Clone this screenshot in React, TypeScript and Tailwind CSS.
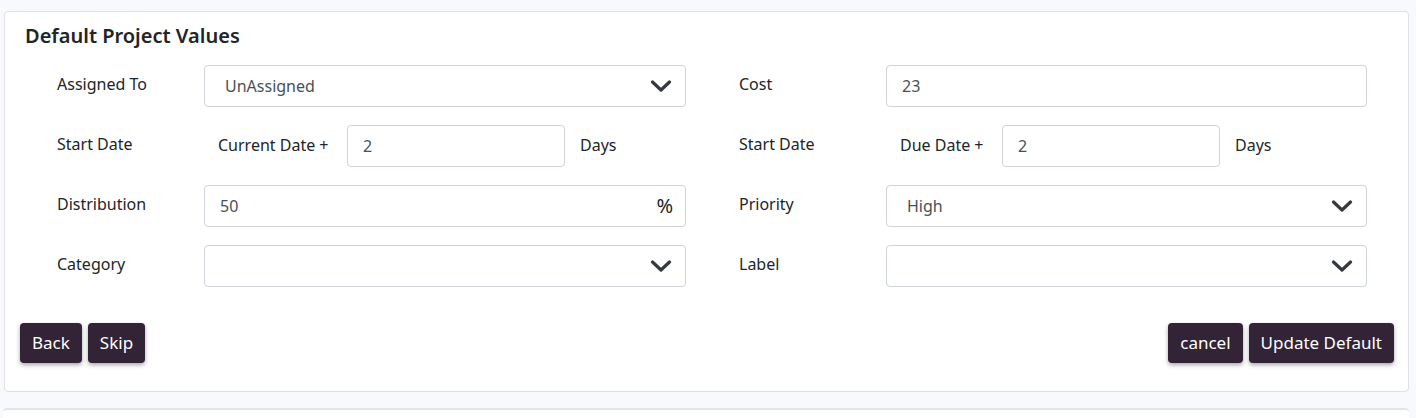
import React from "react";

const font = { fontFamily: '"Noto Sans", "Open Sans", sans-serif' };

function Chevron() {
  return (
    <svg width="22" height="12" viewBox="0 0 22 12" className="shrink-0">
      <polyline points="2.5,2 11,10 19.5,2" fill="none" stroke="#343a40" strokeWidth="3.2" strokeLinecap="round" strokeLinejoin="round" />
    </svg>
  );
}

function Select({ value, w = "w-[482px]" }: { value?: string; w?: string }) {
  return (
    <div className={`flex h-[42px] ${w} items-center justify-between rounded-[4px] border border-[#ced4da] bg-white pl-[20px] pr-[13px] text-[16px] text-[#495057]`}>
      <span>{value ?? ""}</span>
      <Chevron />
    </div>
  );
}

function Input({ value, w = "w-[482px]", suffix }: { value: string; w?: string; suffix?: string }) {
  return (
    <div className={`flex h-[42px] ${w} items-center justify-between rounded-[4px] border border-[#ced4da] bg-white pl-[15px] pr-[12px] text-[16px] text-[#495057]`}>
      <span>{value}</span>
      {suffix ? <span className="text-[20px] text-[#212529]">{suffix}</span> : null}
    </div>
  );
}

function Label({ children }: { children: React.ReactNode }) {
  return <div className="w-[147px] shrink-0 pb-[4px] text-[16px] text-[#212529]">{children}</div>;
}

function DaysRow({ prefix, pw }: { prefix: string; pw: string }) {
  return (
    <div className="flex items-center text-[16px] text-[#212529]">
      <span className={`${pw} shrink-0 pb-[2px] pl-[14px]`}>{prefix}</span>
      <Input value="2" w="w-[218px]" />
      <span className="pb-[2px] pl-[15px]">Days</span>
    </div>
  );
}

function Btn({ children }: { children: React.ReactNode }) {
  return (
    <button className="h-[40px] rounded-[4px] bg-[#322336] px-[12px] text-[17px] text-white shadow-[0_2px_4px_rgba(0,0,0,0.35)]">
      {children}
    </button>
  );
}

function Row({ left, right }: { left: React.ReactNode; right: React.ReactNode }) {
  return (
    <div className="flex items-center">
      <div className="flex w-[682px] shrink-0 items-center">{left}</div>
      <div className="flex items-center">{right}</div>
    </div>
  );
}

export default function App() {
  return (
    <div className="min-h-[418px] w-[1416px] overflow-hidden bg-[#f8f9fc]" style={font}>
      <div className="h-[11px]" />
      <div className="ml-[4px] mr-[7px] rounded-[4px] border border-[#e0e0e0] bg-white">
        <div className="px-[20px] pt-[9px] text-[20px] font-semibold text-[#212529]">Default Project Values</div>
        <div className="mt-[14px] flex flex-col gap-[18px] pl-[52px]">
          <Row
            left={<><Label>Assigned To</Label><Select value="UnAssigned" /></>}
            right={<><Label>Cost</Label><Input value="23" w="w-[481px]" /></>}
          />
          <Row
            left={<><Label>Start Date</Label><DaysRow prefix="Current Date +" pw="w-[143px]" /></>}
            right={<><Label>Start Date</Label><DaysRow prefix="Due Date +" pw="w-[116px]" /></>}
          />
          <Row
            left={<><Label>Distribution</Label><Input value="50" suffix="%" /></>}
            right={<><Label>Priority</Label><Select value="High" w="w-[481px]" /></>}
          />
          <Row
            left={<><Label>Category</Label><Select /></>}
            right={<><Label>Label</Label><Select w="w-[481px]" /></>}
          />
        </div>
        <div className="mt-[36px] flex items-center justify-between pb-[28px] pl-[15px] pr-[14px]">
          <div className="flex gap-[6px]">
            <Btn>Back</Btn>
            <Btn>Skip</Btn>
          </div>
          <div className="flex gap-[6px]">
            <Btn>cancel</Btn>
            <Btn>Update Default</Btn>
          </div>
        </div>
      </div>
      <div className="ml-[3px] mr-[7px] mt-[16px] h-[20px] rounded-t-[4px] border-t-2 border-[#e3e4e8] bg-white" />
    </div>
  );
}
